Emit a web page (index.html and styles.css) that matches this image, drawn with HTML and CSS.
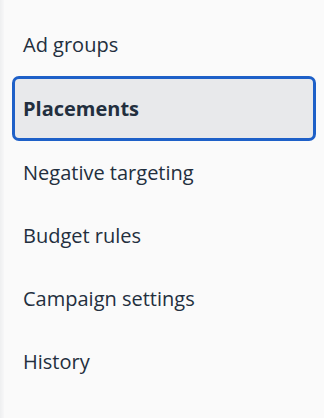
FILE: index.html
```html
<!DOCTYPE html>
<html lang="en">
<head>
    <meta charset="UTF-8">
    <meta name="viewport" content="width=device-width, initial-scale=1.0">
    <title>Campaign navigation</title>
    <link rel="stylesheet" href="styles.css">
</head>
<body>
    <div class="page">
        <div class="edge"></div>
        <nav class="sideNav">
            <a class="navItem" href="#">Ad groups</a>
            <a class="navItem active" href="#">Placements</a>
            <a class="navItem" href="#">Negative targeting</a>
            <a class="navItem" href="#">Budget rules</a>
            <a class="navItem" href="#">Campaign settings</a>
            <a class="navItem" href="#">History</a>
        </nav>
        <div class="mainArea"></div>
    </div>
</body>
</html>
```

FILE: styles.css
```css
body {
    margin: 0;
    font-family: 'Open Sans', 'Noto Sans', sans-serif;
    background-color: #ffffff;
}

.page {
    display: flex;
    height: 418px;
}

.edge {
    width: 4px;
    background: linear-gradient(to right, #eeeff0, #f7f7f8);
}

.sideNav {
    width: 320px;
    background-color: #fafafa;
    display: flex;
    flex-direction: column;
    padding: 13px 0 0 8px;
    box-sizing: border-box;
}

.mainArea {
    flex: 1;
    background-color: #ffffff;
}

.navItem {
    display: flex;
    align-items: center;
    height: 63px;
    width: 304px;
    box-sizing: border-box;
    padding-left: 8px;
    border: 3px solid transparent;
    border-radius: 7px;
    color: #232f3e;
    font-size: 20px;
    text-decoration: none;
}

.navItem.active {
    height: 65px;
    background-color: #e8e9eb;
    border-color: #1e60c8;
    font-weight: 700;
}
```
